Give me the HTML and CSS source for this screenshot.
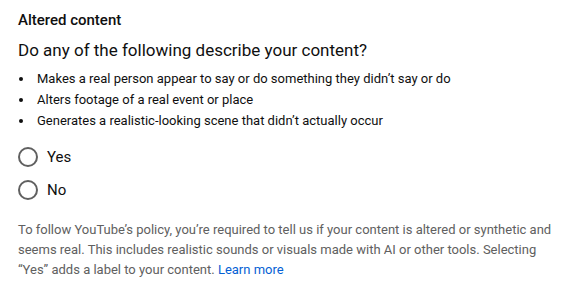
FILE: index.html
```html
<!DOCTYPE html>
<html>
<head>
<meta charset="utf-8">
<link rel="stylesheet" href="styles.css">
</head>
<body>
<section class="panel">
  <h2 class="title">Altered content</h2>
  <p class="question">Do any of the following describe your content?</p>
  <ul class="bullets">
    <li>Makes a real person appear to say or do something they didn’t say or do</li>
    <li>Alters footage of a real event or place</li>
    <li>Generates a realistic-looking scene that didn’t actually occur</li>
  </ul>
  <div class="radios">
    <label class="radio"><span class="circle"></span><span class="label">Yes</span></label>
    <label class="radio"><span class="circle"></span><span class="label">No</span></label>
  </div>
  <p class="note">To follow YouTube’s policy, you’re required to tell us if your content is altered or synthetic and seems real. This includes realistic sounds or visuals made with AI or other tools. Selecting “Yes” adds a label to your content. <a class="link" href="#">Learn more</a></p>
</section>
</body>
</html>
```
FILE: styles.css
```css
html, body {
  margin: 0;
  padding: 0;
  background: #ffffff;
}
body {
  font-family: Roboto, "Noto Sans", Arial, sans-serif;
  color: #0f0f0f;
}
.panel {
  padding: 10px 18px 0 18px;
  width: 540px;
}
.title {
  margin: 0;
  font-size: 15px;
  font-weight: 500;
  line-height: 20px;
}
.question {
  margin: 8px 0 0 0;
  font-size: 17px;
  line-height: 24px;
}
.bullets {
  margin: 6px 0 0 0;
  padding: 0;
  list-style: none;
}
.bullets li {
  position: relative;
  padding-left: 19px;
  font-size: 13px;
  line-height: 21px;
}
.bullets li::before {
  content: "";
  position: absolute;
  left: 1px;
  top: 9px;
  width: 4px;
  height: 4px;
  border-radius: 50%;
  background: #0f0f0f;
}
.radios {
  margin-top: 16px;
  display: flex;
  flex-direction: column;
  gap: 13px;
}
.radio {
  display: flex;
  align-items: center;
  gap: 9px;
  height: 20px;
}
.circle {
  width: 16px;
  height: 16px;
  border: 2px solid #606060;
  border-radius: 50%;
  box-sizing: content-box;
}
.label {
  font-size: 15px;
  line-height: 20px;
}
.note {
  margin: 20px 0 0 0;
  font-size: 13px;
  line-height: 20px;
  color: #606060;
}
.link {
  color: #065fd4;
  text-decoration: none;
}
```
